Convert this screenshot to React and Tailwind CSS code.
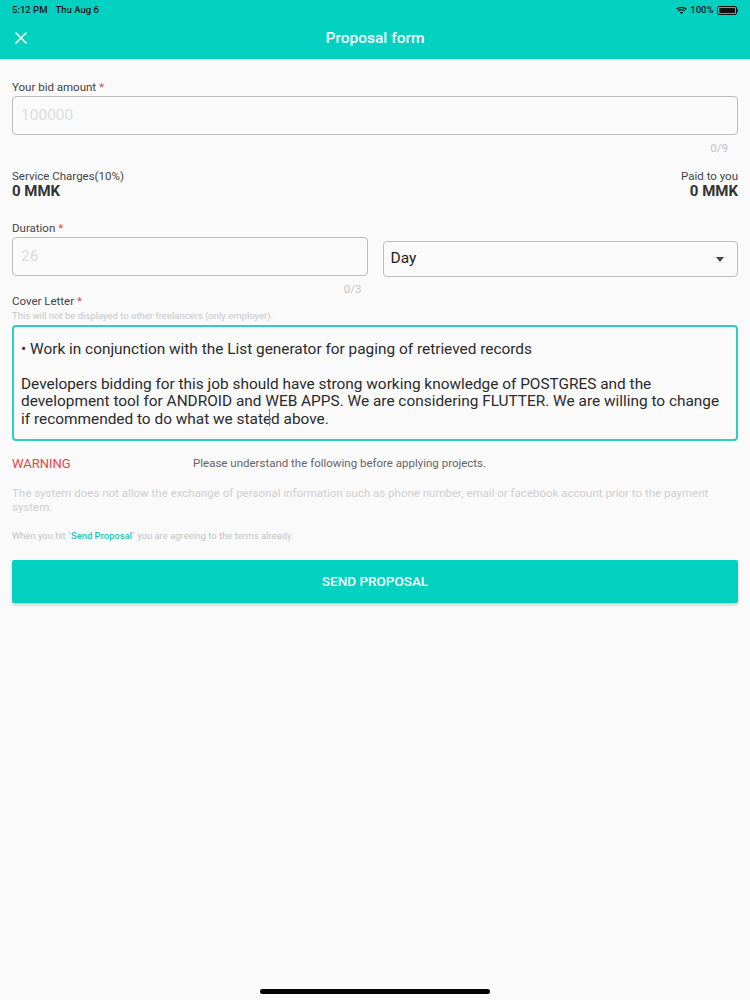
import React from 'react';

// ProposalForm - bid proposal screen

function StatusBar() {
  return (
    <div className="h-[20px] flex items-center justify-between px-[12px] text-[9.5px] font-medium text-[#111]">
      <div className="flex gap-[8px]">
        <span>5:12 PM</span>
        <span>Thu Aug 6</span>
      </div>
      <div className="flex items-center gap-[3px]">
        <svg width="11" height="9" viewBox="0 0 12 9">
          <path d="M6 8.5 L4.3 6.7 A2.5 2.5 0 0 1 7.7 6.7 Z" fill="#111" />
          <path d="M2.6 5 A4.8 4.8 0 0 1 9.4 5" stroke="#111" strokeWidth="1.4" fill="none" />
          <path d="M0.8 3.2 A7.3 7.3 0 0 1 11.2 3.2" stroke="#111" strokeWidth="1.4" fill="none" />
        </svg>
        <span>100%</span>
        <div className="flex items-center">
          <div className="w-[20px] h-[9px] rounded-[2px] border border-[#111] p-[1px]">
            <div className="w-full h-full bg-[#111] rounded-[1px]" />
          </div>
          <div className="w-[1.5px] h-[3px] bg-[#111] rounded-r" />
        </div>
      </div>
    </div>
  );
}

function Label({ text, required }) {
  return (
    <div className="text-[11.5px] leading-[14px] text-[#444]">
      {text}
      {required && <span className="text-[#e0474c]"> *</span>}
    </div>
  );
}

export default function App() {
  return (
    <div className="w-[750px] h-[1000px] bg-[#fafafb] flex flex-col font-['Roboto','Liberation_Sans',sans-serif] relative">
      {/* header */}
      <div className="bg-[#02d1c2] h-[59px] flex flex-col shadow-[0_1px_2px_rgba(0,0,0,0.08)]">
        <StatusBar />
        <div className="flex-1 flex items-center relative">
          <div className="absolute left-[15px] top-[12px] text-white">
            <svg width="12" height="12" viewBox="0 0 12 12">
              <path d="M1 1 L11 11 M11 1 L1 11" stroke="white" strokeWidth="1.6" strokeLinecap="round" />
            </svg>
          </div>
          <div className="w-full text-center text-white text-[15.5px] font-medium mt-[-2px]">Proposal form</div>
        </div>
      </div>

      <div className="px-[12px] pt-[21px] flex flex-col">
        {/* bid amount */}
        <Label text="Your bid amount" required />
        <div className="mt-[2px] h-[39px] border border-[#bdbdbd] rounded-[4px] flex items-center px-[8px] text-[15.5px] text-[#dcdcdc]">
          100000
        </div>
        <div className="text-right text-[11.5px] leading-[14px] text-[#c4c4c4] pr-[10px] mt-[6px]">0/9</div>

        {/* charges */}
        <div className="flex justify-between mt-[14px]">
          <div>
            <div className="text-[11.5px] leading-[14px] text-[#444]">Service Charges(10%)</div>
            <div className="text-[15px] font-bold text-[#333] leading-[16px]">0 MMK</div>
          </div>
          <div className="text-right">
            <div className="text-[11.5px] leading-[14px] text-[#444]">Paid to you</div>
            <div className="text-[15px] font-bold text-[#333] leading-[16px]">0 MMK</div>
          </div>
        </div>

        {/* duration */}
        <div className="mt-[22px]">
          <Label text="Duration" required />
        </div>
        <div className="flex gap-[15px] mt-[2px]">
          <div className="flex-1 flex flex-col">
            <div className="h-[39px] border border-[#bdbdbd] rounded-[4px] flex items-center px-[8px] text-[15.5px] text-[#dcdcdc]">
              26
            </div>
            <div className="text-right text-[11.5px] leading-[14px] text-[#c4c4c4] pr-[6px] mt-[6px]">0/3</div>
          </div>
          <div className="flex-1 pt-[4px]">
            <div className="h-[36px] border border-[#bdbdbd] rounded-[4px] flex items-center justify-between px-[7px] text-[15.5px] text-[#222]">
              <span>Day</span>
              <svg width="8" height="5" viewBox="0 0 8 5" className="mr-[6px]">
                <path d="M0 0 L8 0 L4 5 Z" fill="#444" />
              </svg>
            </div>
          </div>
        </div>

        {/* cover letter */}
        <div className="mt-[-2px]">
          <Label text="Cover Letter" required />
        </div>
        <div className="text-[9.5px] leading-[12px] text-[#c8c8c8] mt-[2px]">This will not be displayed to other freelancers (only employer).</div>
        <div className="mt-[3px] h-[116px] border-2 border-[#2ccfc3] rounded-[4px] px-[7px] pt-[13.5px] text-[15.4px] text-[#2b2b2b] leading-[17.5px]">
          <div>• Work in conjunction with the List generator for paging of retrieved records</div>
          <div className="h-[17.5px]" />
          <div>
            Developers bidding for this job should have strong working knowledge of POSTGRES and the
            development tool for ANDROID and WEB APPS. We are considering FLUTTER. We are willing to change
            if recommended to do what we stated above.
          </div>
          {/* text caret */}
          <div className="absolute left-[269px] top-[409px] w-[1px] h-[17px] bg-[#3b82f6]" />
        </div>

        {/* warning */}
        <div className="flex items-center mt-[15px] h-[16px]">
          <div className="w-[181px] text-[13px] text-[#e0474c]">WARNING</div>
          <div className="text-[11.5px] text-[#666]">Please understand the following before applying projects.</div>
        </div>
        <div className="text-[11.5px] text-[#cfcfcf] leading-[14px] mt-[14px] pr-[20px]">
          The system does not allow the exchange of personal information such as phone number, email or facebook account prior to the payment system.
        </div>
        <div className="text-[9.4px] leading-[12px] text-[#c4c4c4] mt-[16px]">
          When you hit "<span className="text-[#17c9bb] font-medium">Send Proposal</span>" you are agreeing to the terms already.
        </div>

        <button className="mt-[18px] h-[43px] w-full bg-[#02d1c2] rounded-[2px] shadow-[0_2px_3px_rgba(0,0,0,0.2)] text-white text-[13.5px] font-medium">
          SEND PROPOSAL
        </button>
      </div>

      {/* home indicator */}
      <div className="absolute bottom-[6px] left-[260px] w-[230px] h-[5px] rounded-full bg-black" />
    </div>
  );
}
